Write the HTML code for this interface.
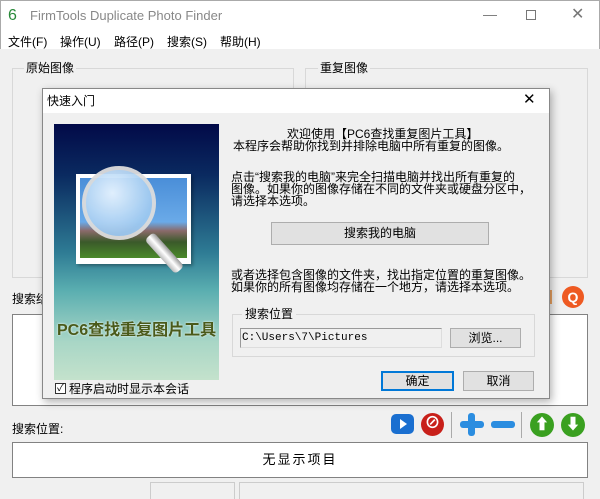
<!DOCTYPE html>
<html><head><meta charset="utf-8"><style>
*{margin:0;padding:0;box-sizing:border-box}
body{width:600px;height:499px;background:#f0f0f0;position:relative;overflow:hidden;font-family:"Liberation Sans","Noto Sans CJK SC",sans-serif;font-size:12px;color:#000}
.a{position:absolute}
.t{position:absolute;white-space:nowrap;line-height:12px}
.gb{position:absolute;border:1px solid #d8d8d8}
.btn{position:absolute;background:#e1e1e1;border:1px solid #adadad;text-align:center}
</style></head><body>
<div class="a" style="left:0;top:0;width:600px;height:49px;background:#fff;border:1px solid #aaa;border-bottom:none"></div>
<div class="t" style="left:8px;top:8px;font-size:16px;line-height:16px;color:#2a8a3a">6</div>
<div class="t" style="left:30px;top:10px;font-size:13px;color:#888">FirmTools Duplicate Photo Finder</div>
<div class="t" style="left:483px;top:8px;font-size:14px;color:#777">—</div>
<div class="a" style="left:526px;top:10px;width:10px;height:10px;border:1px solid #777"></div>
<div class="t" style="left:571px;top:7px;font-size:16px;line-height:16px;color:#777">✕</div>
<div class="t" style="left:8px;top:36px">文件(F)</div>
<div class="t" style="left:60px;top:36px">操作(U)</div>
<div class="t" style="left:114px;top:36px">路径(P)</div>
<div class="t" style="left:167px;top:36px">搜索(S)</div>
<div class="t" style="left:220px;top:36px">帮助(H)</div>
<div class="gb" style="left:12px;top:68px;width:282px;height:210px"></div>
<div class="t" style="left:24px;top:62px;background:#f0f0f0;padding:0 2px">原始图像</div>
<div class="gb" style="left:305px;top:68px;width:283px;height:210px"></div>
<div class="t" style="left:318px;top:62px;background:#f0f0f0;padding:0 2px">重复图像</div>
<div class="t" style="left:12px;top:293px">搜索结</div>
<div class="a" style="left:12px;top:314px;width:576px;height:92px;background:#fff;border:1px solid #828282"></div>
<div class="a" style="left:540px;top:290px;width:12px;height:14px;background:#e8a060"></div>
<div class="a" style="left:562px;top:286px;width:22px;height:22px;border-radius:50%;background:#ee5a22;color:#fff;font-weight:bold;text-align:center;line-height:22px;font-size:14px">Q</div>
<div class="t" style="left:12px;top:423px">搜索位置:</div>
<div class="a" style="left:391px;top:414px;width:23px;height:20px;border-radius:5px;background:#1a6fd0"><div class="a" style="left:9px;top:5px;border-left:7px solid #fff;border-top:5px solid transparent;border-bottom:5px solid transparent"></div></div>
<div class="a" style="left:421px;top:413px;width:23px;height:23px;border-radius:50%;background:#c8201a;color:#fff;font-weight:bold;text-align:center;line-height:22px;font-size:16px">⊘</div>
<div class="a" style="left:451px;top:412px;width:1px;height:26px;background:#aaa"></div>
<div class="a" style="left:460px;top:421px;width:24px;height:7px;background:#2b8de0;border-radius:3px"></div>
<div class="a" style="left:468px;top:413px;width:7px;height:23px;background:#2b8de0;border-radius:3px"></div>
<div class="a" style="left:491px;top:421px;width:24px;height:7px;background:#2b8de0;border-radius:3px"></div>
<div class="a" style="left:521px;top:412px;width:1px;height:26px;background:#aaa"></div>
<div class="a" style="left:530px;top:413px;width:24px;height:24px;border-radius:50%;background:#3aa020;color:#fff;text-align:center;line-height:24px;font-weight:bold;font-size:15px">⬆</div>
<div class="a" style="left:561px;top:413px;width:24px;height:24px;border-radius:50%;background:#3aa020;color:#fff;text-align:center;line-height:24px;font-weight:bold;font-size:15px">⬇</div>
<div class="a" style="left:12px;top:442px;width:576px;height:36px;background:#fff;border:1px solid #828282;text-align:center;line-height:34px;font-size:13px;letter-spacing:2px">无显示项目</div>
<div class="a" style="left:150px;top:482px;width:85px;height:17px;border:1px solid #ccc;border-bottom:none"></div>
<div class="a" style="left:239px;top:482px;width:345px;height:17px;border:1px solid #ccc;border-bottom:none"></div>
<div class="a" style="left:42px;top:88px;width:508px;height:311px;background:#f0f0f0;border:1px solid #888;box-shadow:2px 3px 8px rgba(0,0,0,.3)"></div>
<div class="a" style="left:43px;top:89px;width:506px;height:24px;background:#fff"></div>
<div class="t" style="left:47px;top:95px">快速入门</div>
<div class="t" style="left:523px;top:92px;font-size:15px;line-height:15px">✕</div>
<div class="a" style="left:54px;top:124px;width:165px;height:256px;background:linear-gradient(#020a48 0%,#0a2a60 20%,#2e7b94 50%,#5aaeb0 65%,#a8d6c6 85%,#c4e2cc 100%)"></div>
<div class="a" style="left:76px;top:174px;width:115px;height:90px;background:#fff;box-shadow:2px 2px 3px rgba(0,0,0,.3)"></div>
<div class="a" style="left:80px;top:178px;width:107px;height:80px;background:linear-gradient(#4a8ed8 0%,#6aaae8 55%,#8a6a6a 66%,#3a5a2a 80%,#4a8a2a 100%)"></div>
<div class="a" style="left:82px;top:166px;width:74px;height:74px;border-radius:50%;border:4px solid #ddd;background:radial-gradient(circle at 40% 35%,#e8f4ff,#9cc8f0 70%);opacity:.95"></div>
<div class="a" style="left:143px;top:236px;width:12px;height:46px;background:linear-gradient(90deg,#bbb,#fff,#999);transform:rotate(-42deg);transform-origin:top;border-radius:4px"></div>
<div class="t" style="left:57px;top:323px;font-size:16px;line-height:16px;font-weight:bold;color:#4a5a1a;text-shadow:0 0 2px #fff">PC6查找重复图片工具</div>
<div class="a" style="left:55px;top:383px;width:11px;height:11px;border:1px solid #333;background:#fff;font-size:10px;line-height:9px;text-align:center">✓</div>
<div class="t" style="left:69px;top:383px">程序启动时显示本会话</div>
<div class="t" style="left:287px;top:128px">欢迎使用【PC6查找重复图片工具】</div>
<div class="t" style="left:233px;top:140px">本程序会帮助你找到并排除电脑中所有重复的图像。</div>
<div class="t" style="left:231px;top:171px">点击“搜索我的电脑”来完全扫描电脑并找出所有重复的</div>
<div class="t" style="left:231px;top:183px">图像。如果你的图像存储在不同的文件夹或硬盘分区中，</div>
<div class="t" style="left:231px;top:195px">请选择本选项。</div>
<div class="btn" style="left:271px;top:222px;width:218px;height:23px;line-height:21px">搜索我的电脑</div>
<div class="t" style="left:231px;top:269px">或者选择包含图像的文件夹，找出指定位置的重复图像。</div>
<div class="t" style="left:231px;top:281px">如果你的所有图像均存储在一个地方，请选择本选项。</div>
<div class="gb" style="left:232px;top:314px;width:303px;height:43px"></div>
<div class="t" style="left:242px;top:308px;background:#f0f0f0;padding:0 3px">搜索位置</div>
<div class="a" style="left:240px;top:328px;width:202px;height:20px;border:1px solid #999;border-right-color:#ddd;border-bottom-color:#ddd;font-family:'Liberation Mono',monospace;font-size:11px;line-height:18px;padding-left:1px">C:\Users\7\Pictures</div>
<div class="btn" style="left:450px;top:328px;width:71px;height:20px;line-height:18px">浏览...</div>
<div class="btn" style="left:381px;top:371px;width:73px;height:20px;line-height:17px;border:2px solid #0078d7">确定</div>
<div class="btn" style="left:463px;top:371px;width:71px;height:20px;line-height:18px">取消</div>
</body></html>
